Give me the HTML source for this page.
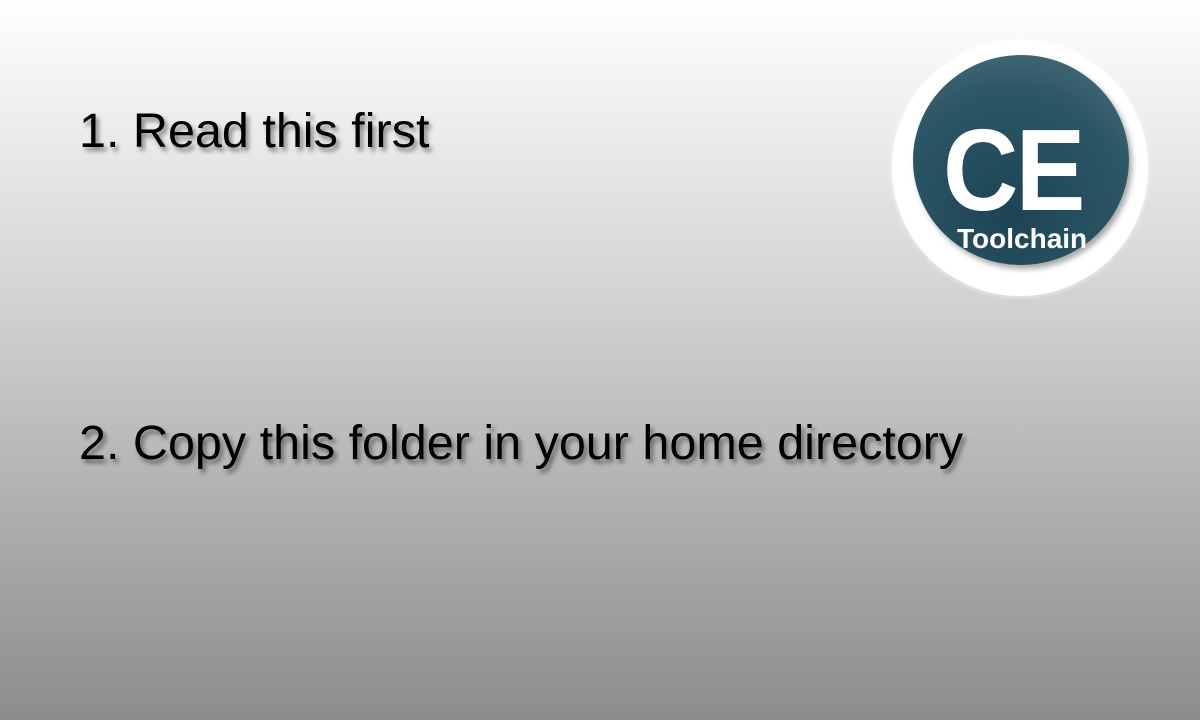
<!DOCTYPE html>
<html><head><style>
html,body{margin:0;padding:0}
body{width:1200px;height:720px;overflow:hidden;position:relative;background:linear-gradient(#ffffff 0%,#d4d4d4 40%,#8c8c8c 100%);font-family:"Liberation Sans",sans-serif}
.t{position:absolute;left:79px;font-size:48.5px;color:#000;text-shadow:3px 4px 5px rgba(0,0,0,0.45);white-space:nowrap;line-height:1}
.o{position:absolute;left:892px;top:40px;width:256px;height:256px;border-radius:50%;background:#fff;box-shadow:0 0 6px rgba(255,255,255,0.8)}
.i{position:absolute;left:913px;top:55px;width:216px;height:210px;border-radius:50%;background:radial-gradient(circle at 45% 75%,#1c4455 0%,#2c5565 60%,#4f7480 100%);box-shadow:3px 4px 6px rgba(0,0,0,0.35)}
.ce{position:absolute;left:943px;top:112px;font-size:116px;font-weight:bold;color:#fff;letter-spacing:-3px;line-height:1;transform:scaleX(0.9);transform-origin:left top}
.tc{position:absolute;left:957px;top:225px;font-size:28px;font-weight:bold;color:#fff;line-height:1}
</style></head><body>
<div class="t" style="top:107px">1. Read this first</div>
<div class="t" style="top:419px">2. Copy this folder in your home directory</div>
<div class="o"></div>
<div class="i"></div>
<div class="ce">CE</div>
<div class="tc">Toolchain</div>
</body></html>
